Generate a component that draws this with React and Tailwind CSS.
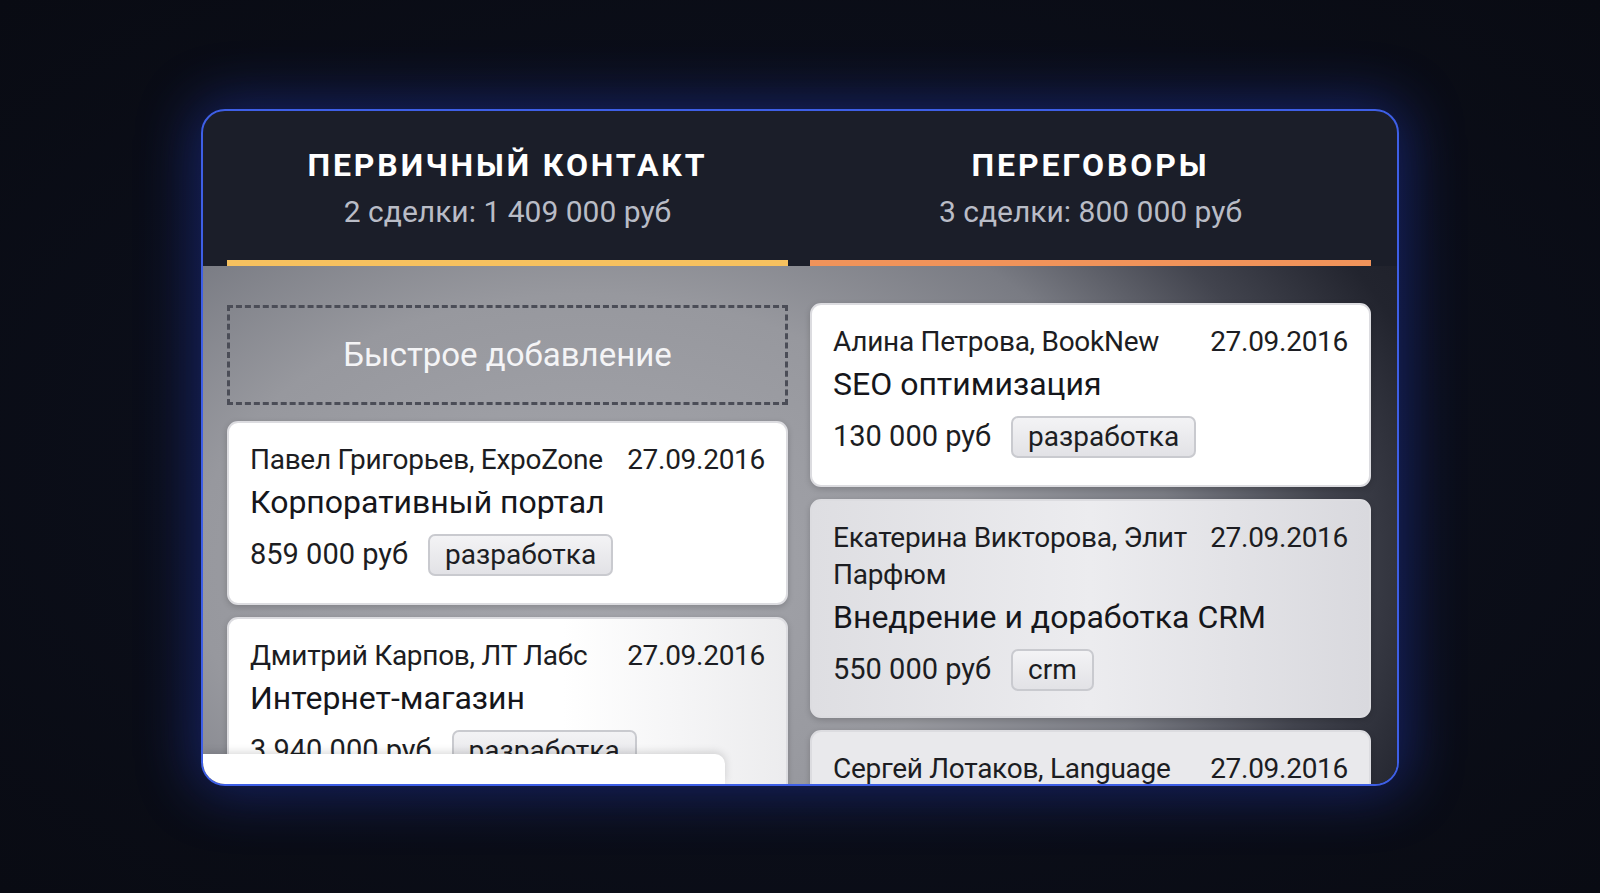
import React from "react";

const font = { fontFamily: "Roboto, 'Noto Sans', sans-serif" };

function Tag({ children }) {
  return (
    <span className="inline-flex items-center h-[42px] px-[15px] rounded-[7px] border-2 border-[#c9cacf] bg-[linear-gradient(180deg,#f3f3f5,#e2e2e6)] text-[28px] leading-none text-[#1c1d22]">
      {children}
    </span>
  );
}

function Card({ who, who2, title, price, tag, className = "", bg = "bg-white" }) {
  return (
    <div className={`rounded-[11px] border-2 border-[#dcdce0] ${bg} px-[21px] pt-[18px] shadow-[0_2px_6px_rgba(0,0,0,0.18)] shrink-0 ${className}`}>
      <div className="flex justify-between items-start gap-2 text-[28px] tracking-[-0.01em] leading-[37px] text-[#1c1d22]">
        <div className="whitespace-nowrap">
          <div>{who}</div>
          {who2 && <div>{who2}</div>}
        </div>
        <div className="shrink-0 whitespace-nowrap">27.09.2016</div>
      </div>
      {title && <div className="mt-[3px] text-[32px] leading-[42px] whitespace-nowrap text-[#15161b]">{title}</div>}
      {price && (
        <div className="mt-[10px] flex items-center gap-[20px] text-[29px] whitespace-nowrap text-[#1c1d22]">
          <span>{price}</span>
          <Tag>{tag}</Tag>
        </div>
      )}
    </div>
  );
}

export default function App() {
  return (
    <div style={font} className="w-full h-[893px] bg-[radial-gradient(ellipse_at_50%_50%,#10152a_0%,#0b0e19_55%,#090b13_100%)] flex justify-center pt-[109px] overflow-hidden">
      <div className="relative w-[1198px] h-[677px] rounded-[24px] border-2 border-[#3e5fe6] bg-[#1b1e29] shadow-[0_0_55px_8px_rgba(35,60,190,0.45)] overflow-hidden flex flex-col">
        {/* header */}
        <div className="grid grid-cols-2 gap-[22px] pl-[24px] pr-[26px] shrink-0">
          <div className="flex flex-col items-center">
            <div className="mt-[35px] text-[32px] font-bold tracking-[0.09em] leading-[38px] text-white">ПЕРВИЧНЫЙ КОНТАКТ</div>
            <div className="mt-[9px] text-[30px] leading-[38px] text-[#b9bcc6]">2 сделки: 1 409 000 руб</div>
            <div className="mt-[29px] h-[6px] w-full bg-[#f6c15f]"></div>
          </div>
          <div className="flex flex-col items-center">
            <div className="mt-[35px] text-[32px] font-bold tracking-[0.09em] leading-[38px] text-white">ПЕРЕГОВОРЫ</div>
            <div className="mt-[9px] text-[30px] leading-[38px] text-[#b9bcc6]">3 сделки: 800 000 руб</div>
            <div className="mt-[29px] h-[6px] w-full bg-[#f0935a]"></div>
          </div>
        </div>
        {/* body */}
        <div className="flex-1 min-h-0 bg-[radial-gradient(ellipse_980px_680px_at_32%_58%,#a6a7ad_0%,#97989e_40%,#797b83_60%,#42444e_76%,#22242e_90%,#1d1f29_100%)] grid grid-cols-2 gap-[22px] pl-[24px] pr-[26px] pt-[39px] overflow-hidden">
          <div className="flex flex-col min-h-0">
            <div className="h-[100px] shrink-0 border-[3px] border-dashed border-[#4b4d57] flex items-center justify-center text-[33px] text-[#f4f4f6]">
              Быстрое добавление
            </div>
            <Card className="mt-[16px] h-[184px]" who="Павел Григорьев, ExpoZone" title="Корпоративный портал" price="859 000 руб" tag="разработка" />
            <Card className="mt-[12px] h-[184px]" bg="bg-[linear-gradient(90deg,#ffffff_60%,#ececee)]" who="Дмитрий Карпов, ЛТ Лабс" title="Интернет-магазин" price="3 940 000 руб" tag="разработка" />
          </div>
          <div className="flex flex-col min-h-0 -mt-[2px]">
            <Card className="h-[184px]" who="Алина Петрова, BookNew" title="SEO оптимизация" price="130 000 руб" tag="разработка" />
            <Card className="mt-[12px] h-[219px]" bg="bg-[linear-gradient(90deg,#dedee2,#ececef_50%,#d9d9de)]" who="Екатерина Викторова, Элит" who2="Парфюм" title="Внедрение и доработка CRM" price="550 000 руб" tag="crm" />
            <Card className="mt-[12px] h-[120px]" bg="bg-[#e9e9ec]" who="Сергей Лотаков, Language" />
          </div>
        </div>
        {/* bottom overlay bar */}
        <div className="absolute left-0 bottom-0 w-[522px] h-[30px] bg-white rounded-tr-[10px] shadow-[0_-2px_8px_rgba(0,0,0,0.15)]"></div>
      </div>
    </div>
  );
}
